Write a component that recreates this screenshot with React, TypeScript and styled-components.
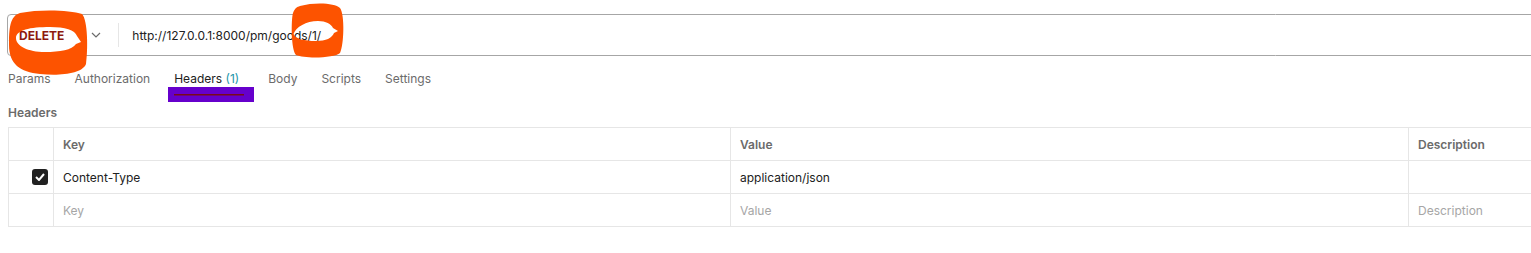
import React from "react";
import styled, { createGlobalStyle } from "styled-components";

const Global = createGlobalStyle`
  html, body { margin: 0; padding: 0; background: #fff; }
  body { font-family: Inter, "Noto Sans", sans-serif; color: #212121; }
`;

const Page = styled.div`
  position: relative;
  width: 1531px;
  height: 253px;
  overflow: hidden;
  padding-top: 14px;
  box-sizing: border-box;
`;

const UrlBar = styled.div`
  display: flex;
  align-items: center;
  margin-left: 7px;
  width: 1600px;
  height: 42px;
  box-sizing: border-box;
  border: 1px solid #a6a6a6;
  border-radius: 4px;
`;

const Method = styled.div`
  display: flex;
  align-items: center;
  gap: 27px;
  padding-left: 11px;
  padding-right: 17px;
  height: 24px;
  border-right: 1px solid #e6e6e6;
  font-size: 12px;
  font-weight: 700;
  color: #8e1a10;
`;

const Url = styled.div`
  padding-left: 13px;
  font-size: 12px;
  color: #212121;
`;

const Tabs = styled.div`
  display: flex;
  gap: 24px;
  margin: 14px 0 0 8px;
  height: 30px;
`;

const Tab = styled.div<{ $active?: boolean }>`
  font-size: 12px;
  line-height: 14px;
  padding-top: 2px;
  margin-right: ${(p) => (p.$active ? "5px" : "0")};
  color: ${(p) => (p.$active ? "#212121" : "#6b6b6b")};
  box-sizing: border-box;
`;

const Count = styled.span`
  color: #1c96aa;
`;

const SectionTitle = styled.div`
  margin: 5px 0 0 8px;
  font-size: 12px;
  font-weight: 600;
  color: #6b6b6b;
  height: 15px;
  line-height: 15px;
`;

const Table = styled.div`
  display: grid;
  grid-template-columns: 45px 677px 678px 200px;
  margin: 7px 0 0 8px;
  border-top: 1px solid #e6e6e6;
  border-left: 1px solid #e6e6e6;
  width: max-content;
`;

const Cell = styled.div<{ $head?: boolean; $placeholder?: boolean }>`
  height: 33px;
  box-sizing: border-box;
  border-right: 1px solid #e6e6e6;
  border-bottom: 1px solid #e6e6e6;
  display: flex;
  align-items: center;
  padding-left: 9px;
  font-size: 12px;
  font-weight: ${(p) => (p.$head ? 600 : 400)};
  color: ${(p) => (p.$head ? "#6b6b6b" : p.$placeholder ? "#a6a6a6" : "#212121")};
`;

const CheckCell = styled(Cell)`
  padding-left: 23px;
`;

const Checkbox = styled.div`
  width: 16px;
  height: 16px;
  border-radius: 3px;
  background: #212121;
  display: flex;
  align-items: center;
  justify-content: center;
`;

const Overlay = styled.svg`
  position: absolute;
  left: 0;
  top: 0;
  pointer-events: none;
`;

const Chevron = () => (
  <svg width="10" height="6" viewBox="0 0 10 6" fill="none">
    <path d="M1 1l4 4 4-4" stroke="#6b6b6b" strokeWidth="1.2" />
  </svg>
);

export default function App() {
  return (
    <>
      <Global />
      <Page>
        <UrlBar>
          <Method>
            DELETE
            <Chevron />
          </Method>
          <Url>http://127.0.0.1:8000/pm/goods/1/</Url>
        </UrlBar>
        <Tabs>
          <Tab>Params</Tab>
          <Tab>Authorization</Tab>
          <Tab $active>
            Headers <Count>(1)</Count>
          </Tab>
          <Tab>Body</Tab>
          <Tab>Scripts</Tab>
          <Tab>Settings</Tab>
        </Tabs>
        <SectionTitle>Headers</SectionTitle>
        <Table>
          <Cell $head />
          <Cell $head>Key</Cell>
          <Cell $head>Value</Cell>
          <Cell $head>Description</Cell>

          <CheckCell>
            <Checkbox>
              <svg width="10" height="8" viewBox="0 0 10 8" fill="none">
                <path d="M1 4l3 3 5-6" stroke="#fff" strokeWidth="2" />
              </svg>
            </Checkbox>
          </CheckCell>
          <Cell>Content-Type</Cell>
          <Cell>application/json</Cell>
          <Cell />

          <Cell />
          <Cell $placeholder>Key</Cell>
          <Cell $placeholder>Value</Cell>
          <Cell $placeholder>Description</Cell>
        </Table>
        <Overlay width="1531" height="253" viewBox="0 0 1531 253">
          <path
            fill="#fd5300"
            fillRule="evenodd"
            d="M 20 13 C 40 9, 70 10, 82 14 C 88 20, 88 50, 86 64 C 82 74, 60 76, 40 74 C 20 72, 9 64, 9 45 C 9 28, 10 16, 20 13 Z
               M 16 38 C 16 30, 30 27, 50 27 C 65 27, 75 30, 77 36 L 81 42 L 76 44 C 72 50, 60 52, 45 52 C 28 52, 16 46, 16 38 Z"
          />
          <path
            fill="#fd5300"
            fillRule="evenodd"
            d="M 300 6 C 315 2, 335 3, 340 8 C 345 15, 344 45, 340 53 C 335 58, 305 59, 296 55 C 291 50, 291 20, 293 13 C 295 8, 297 7, 300 6 Z
               M 293.5 34 C 296 27, 306 21, 318 21 C 326 21, 331 24, 333 28 L 338 31 L 334 33 C 332 38, 326 41, 316 41 C 304 41, 296 39, 293.5 34 Z"
          />
          <rect x="168" y="87" width="86" height="15" fill="#6600cc" />
          <rect x="174" y="94" width="70" height="1.5" fill="#7a0a1a" />
        </Overlay>
      </Page>
    </>
  );
}
